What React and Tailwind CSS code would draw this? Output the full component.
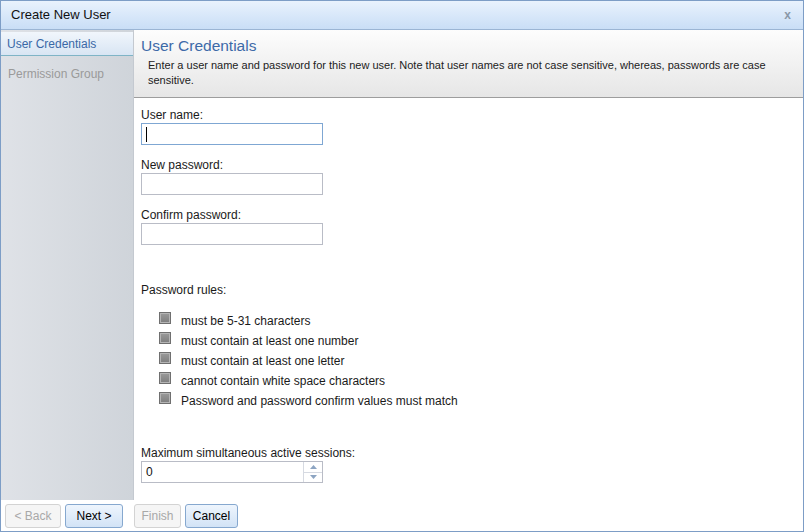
import React from "react";

const font = { fontFamily: '"Liberation Sans", Arial, sans-serif' };

function Rule({ children }) {
  return (
    <div className="flex h-[20px] items-center">
      <span className="ml-[18px] mr-[10px] mb-[6px] h-[12px] w-[12px] border border-[#6f6f6f] bg-gradient-to-b from-[#9a9a9a] to-[#7d7d7d] shadow-[inset_0_0_0_1px_#b4b4b4]" />
      <span className="text-[12px] text-[#1a1a1a]">{children}</span>
    </div>
  );
}

function Label({ children, className = "" }) {
  return (
    <div className={"h-[16px] text-[12px] leading-[16px] text-[#1a1a1a] " + className}>
      {children}
    </div>
  );
}

function Field({ focused }) {
  return (
    <div
      className={
        "flex h-[22px] w-[182px] items-center border bg-white px-[4px] " +
        (focused ? "border-[#7fa7d3]" : "border-[#b9bcc6]")
      }
    >
      {focused && <span className="h-[15px] w-px bg-black" />}
    </div>
  );
}

function Btn({ children, disabled, className = "" }) {
  return (
    <div
      className={
        "flex h-[24px] items-center justify-center rounded-[3px] border text-[12px] " +
        (disabled
          ? "border-[#d3d3d3] bg-[#f5f5f5] text-[#a8a8a8] "
          : "border-[#86a8cf] bg-gradient-to-b from-[#eef5fd] to-[#d2e3f6] text-black ") +
        className
      }
    >
      {children}
    </div>
  );
}

export default function App() {
  return (
    <div style={font} className="flex h-[532px] w-[804px] flex-col border border-[#7d9dc6] bg-white">
      {/* title bar */}
      <div className="flex h-[29px] shrink-0 items-center justify-between border-b border-[#9bb5d4] bg-gradient-to-b from-[#e9f2fd] to-[#c9def6] pl-[10px] pr-[12px]">
        <span className="text-[13px] text-[#111]">Create New User</span>
        <span className="text-[12px] font-bold text-[#8a98a8]">x</span>
      </div>

      <div className="flex min-h-0 flex-1">
        {/* sidebar */}
        <div className="flex w-[133px] shrink-0 flex-col border-r border-[#c4c9d0] bg-gradient-to-r from-[#dfe2e7] to-[#cfd4da] pt-[2px]">
          <div className="flex h-[24px] items-center border-b border-[#7fb4c6] bg-gradient-to-b from-[#f1f6fc] to-[#d8e5f3] pl-[6px] text-[12px] text-[#3a68a6]">
            User Credentials
          </div>
          <div className="mt-[6px] flex h-[24px] items-center pl-[7px] text-[12px] text-[#9a9a9a]">
            Permission Group
          </div>
        </div>

        {/* main */}
        <div className="flex min-w-0 flex-1 flex-col">
          <div className="border-b border-[#9d9d9d] bg-gradient-to-b from-[#fdfdfd] to-[#e6e6e6] pb-[9px] pl-[7px] pr-[14px] pt-[6px]">
            <div className="h-[22px] text-[15.5px] leading-[20px] text-[#3d6aa8]">User Credentials</div>
            <div className="pl-[7px] text-[11px] leading-[15px] text-[#222]">
              Enter a user name and password for this new user. Note that user names are not case sensitive, whereas, passwords are case sensitive.
            </div>
          </div>

          <div className="flex flex-col pl-[7px] pt-[9px]">
            <Label>User name:</Label>
            <Field focused />
            <Label className="mt-[12px]">New password:</Label>
            <Field />
            <Label className="mt-[12px]">Confirm password:</Label>
            <Field />

            <Label className="mt-[37px]">Password rules:</Label>
            <div className="mt-[13px] flex flex-col">
              <Rule>must be 5-31 characters</Rule>
              <Rule>must contain at least one number</Rule>
              <Rule>must contain at least one letter</Rule>
              <Rule>cannot contain white space characters</Rule>
              <Rule>Password and password confirm values must match</Rule>
            </div>

            <Label className="mt-[34px]">Maximum simultaneous active sessions:</Label>
            <div className="flex h-[22px] w-[182px] border border-[#b9bcc6] bg-white">
              <div className="flex flex-1 items-center pl-[4px] text-[12px] text-[#111]">0</div>
              <div className="flex w-[19px] flex-col border-l border-[#d6dae2]">
                <div className="flex flex-1 items-center justify-center border-b border-[#d6dae2]">
                  <svg width="7" height="4" viewBox="0 0 7 4"><path d="M0 4L3.5 0L7 4Z" fill="#8ca4c2" /></svg>
                </div>
                <div className="flex flex-1 items-center justify-center">
                  <svg width="7" height="4" viewBox="0 0 7 4"><path d="M0 0L3.5 4L7 0Z" fill="#8ca4c2" /></svg>
                </div>
              </div>
            </div>
          </div>
        </div>
      </div>

      {/* footer */}
      <div className="flex h-[31px] shrink-0 items-start pl-[4px] pt-[4px]">
        <Btn disabled className="w-[56px]">&lt; Back</Btn>
        <Btn className="ml-[4px] w-[58px]">Next &gt;</Btn>
        <Btn disabled className="ml-[11px] w-[47px]">Finish</Btn>
        <Btn className="ml-[4px] w-[53px]">Cancel</Btn>
      </div>
    </div>
  );
}
